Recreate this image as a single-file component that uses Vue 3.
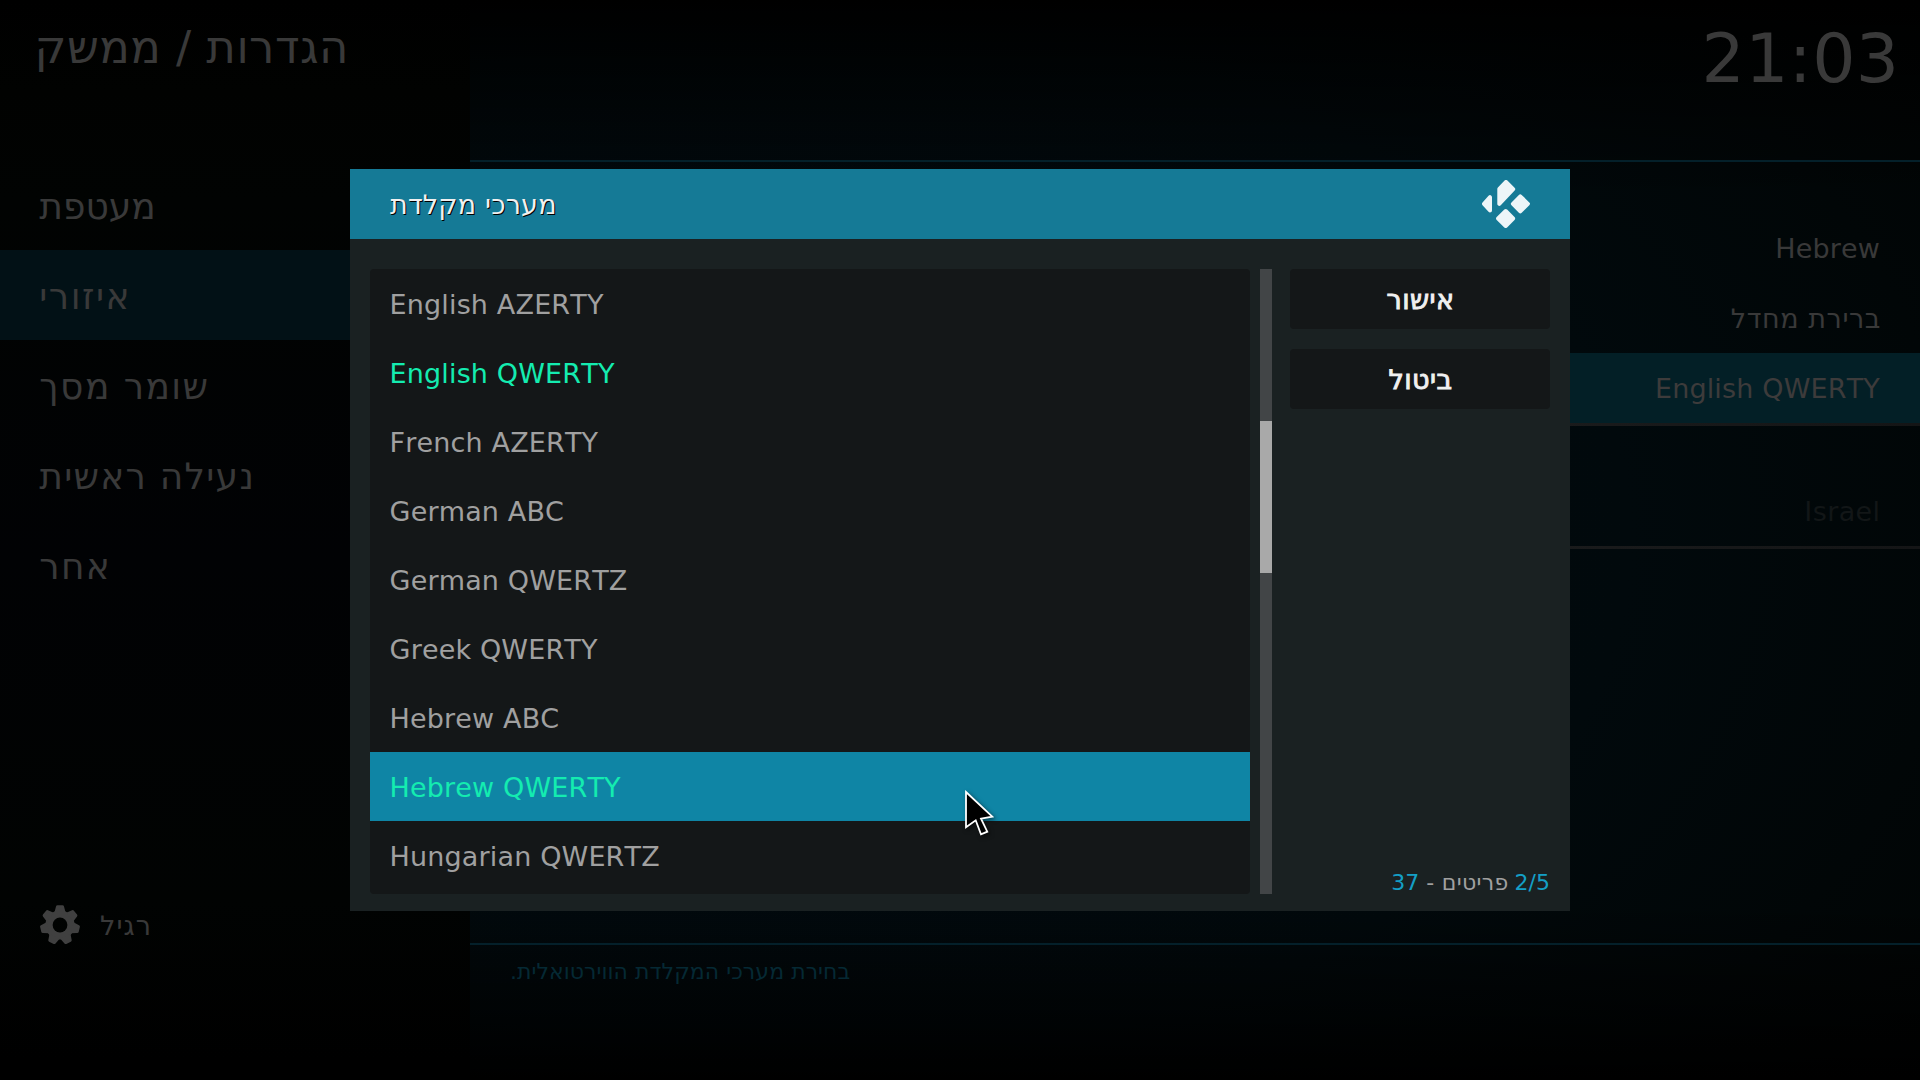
<script setup>
const categories = [
  { label: 'מעטפת', spacing: 0 },
  { label: 'איזורי', spacing: 1.5, active: true },
  { label: 'שומר מסך', spacing: 1.45 },
  { label: 'נעילה ראשית', spacing: 1.25 },
  { label: 'אחר', spacing: 1.3 },
]

const layouts = [
  { label: 'English AZERTY' },
  { label: 'English QWERTY', enabled: true },
  { label: 'French AZERTY' },
  { label: 'German ABC' },
  { label: 'German QWERTZ' },
  { label: 'Greek QWERTY' },
  { label: 'Hebrew ABC' },
  { label: 'Hebrew QWERTY', enabled: true, focused: true },
  { label: 'Hungarian QWERTZ' },
]

const teeth = Array.from({ length: 7 }, (_, i) => (i * 360) / 7)
</script>

<template>
  <div class="screen">
    <aside class="sidebar">
      <h1 class="crumb" dir="rtl">הגדרות / ממשק</h1>
      <nav class="categories">
        <div
          v-for="item in categories"
          :key="item.label"
          class="category"
          :class="{ active: item.active }"
          :style="{ letterSpacing: item.spacing + 'px' }"
        >{{ item.label }}</div>
      </nav>
      <div class="level">
        <svg class="gear" viewBox="-20 -20 40 40">
          <defs>
            <mask id="hub">
              <rect x="-20" y="-20" width="40" height="40" fill="#fff" />
              <circle r="7.4" fill="#000" />
            </mask>
          </defs>
          <g mask="url(#hub)">
            <circle r="14.6" />
            <path
              v-for="a in teeth"
              :key="a"
              d="M-5.6-12.5 L-4-18.6 Q-3.7-19.8-2.5-19.8 H2.5 Q3.7-19.8 4-18.6 L5.6-12.5Z"
              :transform="`rotate(${a})`"
            />
          </g>
        </svg>
        <span class="level-name">רגיל</span>
      </div>
    </aside>

    <main class="content">
      <header class="topbar"><span class="clock">21:03</span></header>
      <section class="settings">
        <div class="setting">Hebrew</div>
        <div class="setting hebrew">ברירת מחדל</div>
        <div class="setting focused">English QWERTY</div>
        <div class="rule"></div>
        <div class="setting disabled">Israel</div>
        <div class="rule"></div>
      </section>
      <footer class="hint"><span dir="rtl">בחירת מערכי המקלדת הווירטואלית.</span></footer>
    </main>

    <div class="dialog">
      <header class="dialog-head">
        <span class="dialog-title">מערכי מקלדת</span>
        <svg class="logo" viewBox="0 0 48 48">
          <path d="M24 2 31.2 9.1 17.3 23.9V8.8Z" />
          <path d="M2 23.8 8 17.2V30.4Z" />
          <path d="M38.3 16.3 45.9 23.8 38.3 31.3 30.9 23.8Z" />
          <path d="M23.7 31 31.1 38.5 23.7 46 16.1 38.5Z" />
        </svg>
      </header>
      <div class="dialog-body">
        <div class="list">
          <div
            v-for="item in layouts"
            :key="item.label"
            class="row"
            :class="{ enabled: item.enabled, focused: item.focused }"
          >{{ item.label }}</div>
        </div>
        <div class="scrollbar"><div class="thumb"></div></div>
        <div class="side">
          <button class="button">אישור</button>
          <button class="button">ביטול</button>
          <div class="count">
            <span class="num">37</span><span class="dash">-</span><span class="items">פריטים</span><span class="num">2/5</span>
          </div>
        </div>
      </div>
    </div>

    <svg class="cursor" viewBox="0 0 40 54">
      <path d="M6 6 32.3 30.7 21 32.7 27.3 45.7 21 48.3 15.7 34.3 6 41.3Z" />
    </svg>
  </div>
</template>

<style>
html,
body {
  background: #000;
}
</style>

<style scoped>
.screen {
  position: relative;
  display: flex;
  width: 1920px;
  height: 1080px;
  overflow: hidden;
  font-family: "DejaVu Sans", sans-serif;
  font-kerning: none;
  color: #393939;
  white-space: nowrap;
  background: #000;
}
.sidebar {
  display: flex;
  flex-direction: column;
  width: 470px;
  background: linear-gradient(180deg, #000 0, #010201 90px, #010302 200px, #010204 560px, #010302 900px, #000 1060px);
}
.crumb {
  box-sizing: border-box;
  height: 160px;
  margin: 0;
  padding: 21px 0 0 34.5px;
  font-size: 45px;
  font-weight: 400;
  line-height: 53px;
  letter-spacing: 0.45px;
  text-align: left;
}
.category {
  box-sizing: border-box;
  height: 90px;
  padding: 4px 0 0 39.3px;
  font-size: 36px;
  line-height: 86px;
}
.category.active {
  background: #021116;
}
.level {
  display: flex;
  align-items: center;
  height: 40px;
  margin: 295px 0 0 40px;
}
.gear {
  width: 40px;
  height: 40px;
  fill: #404040;
}
.level-name {
  margin-left: 20px;
  padding-top: 2px;
  font-size: 27px;
  line-height: 40px;
  letter-spacing: 1.08px;
}
.content {
  display: flex;
  flex-direction: column;
  flex: 1;
  background:
    linear-gradient(180deg, #000 0, transparent 200px, transparent 900px, #000 1080px),
    radial-gradient(ellipse 1450px 950px at 25% 50%, #020a11 0, #01090c 55%, #010302 100%);
}
.topbar {
  display: flex;
  justify-content: flex-end;
  box-sizing: border-box;
  height: 162px;
  padding: 19px 20.5px 0 0;
  border-bottom: 2px solid #04202a;
}
.clock {
  font-size: 68px;
  line-height: 79px;
  letter-spacing: 0.4px;
}
.settings {
  height: 781px;
  padding-top: 51px;
  box-sizing: border-box;
}
.setting {
  box-sizing: border-box;
  height: 70px;
  padding: 2px 40px 0 0;
  font-size: 27px;
  line-height: 67px;
  letter-spacing: 0.16px;
  text-align: right;
}
.setting.hebrew {
  padding-right: 39px;
  letter-spacing: 0.57px;
}
.setting.focused {
  background: #031f26;
  color: #3d3b3b;
}
.setting.disabled {
  margin-top: 50px;
  padding-right: 39.5px;
  color: #121617;
  letter-spacing: 0.4px;
}
.rule {
  height: 3px;
  background: linear-gradient(90deg, #1b1c1d 70%, #141516);
}
.hint {
  flex: 1;
  padding: 13px 0 0 40px;
  border-top: 2px solid #04202a;
  font-size: 22px;
  line-height: 28px;
  letter-spacing: 0.04px;
  color: #052934;
}
.hint span {
  display: inline-block;
}
.dialog {
  position: absolute;
  left: 350px;
  top: 169px;
  display: flex;
  flex-direction: column;
  width: 1220px;
  height: 742px;
  background: #1a2122;
}
.dialog-head {
  display: flex;
  align-items: center;
  justify-content: space-between;
  height: 70px;
  padding: 0 40px;
  background: #157a96;
}
.dialog-title {
  padding-top: 2px;
  font-size: 27px;
  line-height: 68px;
  letter-spacing: 0.18px;
  color: #f0f0f0;
  text-shadow: 1px 1px 0 #000;
}
.logo {
  width: 48px;
  height: 48px;
  fill: #edf5f8;
  stroke: #edf5f8;
  stroke-width: 4;
  stroke-linejoin: round;
}
.dialog-body {
  display: flex;
  flex: 1;
  padding: 30px 20px 17px;
}
.list {
  width: 880px;
  border-radius: 4px;
  background: #141718;
}
.row {
  box-sizing: border-box;
  height: 69px;
  padding: 2px 0 0 19.6px;
  font-size: 27px;
  line-height: 67px;
  letter-spacing: 0.15px;
  color: #a0a0a0;
}
.row.enabled {
  color: #14ecb0;
}
.row.focused {
  background: #0f85a5;
}
.scrollbar {
  width: 12px;
  margin: 0 18px 0 10px;
  background: #424547;
}
.thumb {
  height: 152px;
  margin-top: 152px;
  background: #a9a9a9;
}
.side {
  display: flex;
  flex-direction: column;
  gap: 20px;
  width: 260px;
}
.button {
  height: 60px;
  padding: 1px 0 0 1px;
  border: 0;
  border-radius: 4px;
  background: #141718;
  color: #f0f0f0;
  font-family: inherit;
  font-size: 27px;
  line-height: 59px;
  font-kerning: none;
  letter-spacing: 0.4px;
  -webkit-text-stroke: 0.9px #f0f0f0;
}
.count {
  display: flex;
  justify-content: flex-end;
  margin: auto 0 -1px;
  font-size: 22px;
  line-height: 24px;
  color: #a0a0a0;
}
.num {
  color: #149fc6;
}
.dash {
  margin: 0 7.5px 0 7px;
}
.items {
  margin-right: 6px;
  letter-spacing: 0.33px;
}
.cursor {
  position: absolute;
  left: 960px;
  top: 786px;
  width: 40px;
  height: 54px;
  fill: #000;
  stroke: #fff;
  stroke-width: 1.8;
  filter: drop-shadow(2px 2px 2px rgba(0, 0, 0, 0.5));
}
</style>
